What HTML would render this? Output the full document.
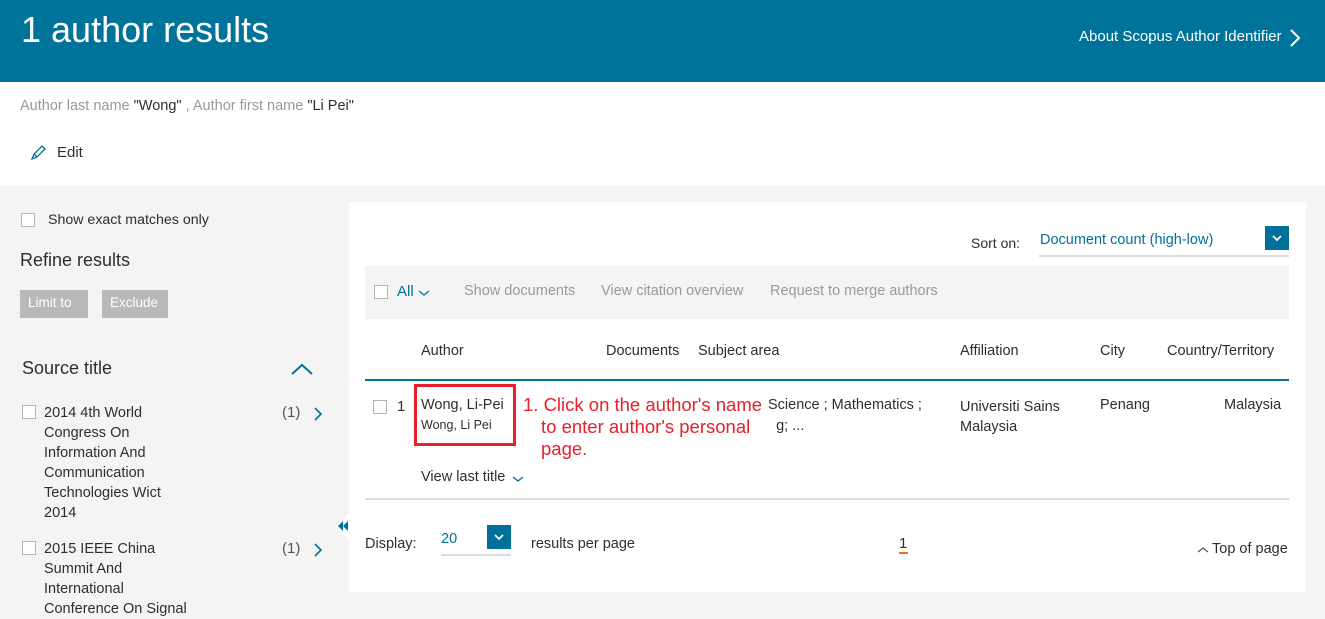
<!DOCTYPE html>
<html><head><meta charset="utf-8"><style>
*{margin:0;padding:0;box-sizing:border-box}
body{width:1325px;height:609px;overflow:hidden;background:#f4f4f4;font-family:"Liberation Sans",sans-serif;color:#2e2e2e;position:relative;font-size:14px}
.a{position:absolute;white-space:nowrap}
.cb{position:absolute;width:14px;height:14px;border:1.5px solid #b5b5b5;background:#fff}
.teal{color:#00719a}
.g{color:#9a9a9a}
</style></head><body>
<div class="a" style="left:0;top:0;width:1325px;height:82px;background:#00739a"></div>
<div class="a" style="left:21px;top:9px;font-size:36px;color:#fff">1 author results</div>
<div class="a" style="left:1079px;top:28px;font-size:15px;color:#fff">About Scopus Author Identifier</div>
<svg class="a" style="left:1288px;top:28px" width="14" height="20"><path d="M3 2l8 8-8 8" stroke="#fff" stroke-width="2" fill="none"/></svg>
<div class="a" style="left:0;top:82px;width:1325px;height:104px;background:#fff"></div>
<div class="a" style="left:20px;top:98px;font-size:14.5px" ><span class="g">Author last name </span>"Wong"<span class="g"> , Author first name </span>"Li Pei"</div>
<svg class="a" style="left:30px;top:145px" width="16" height="16"><path d="M2 14l2-5 8-8 3 3-8 8z M4 9l3 3" stroke="#00719a" stroke-width="1.3" fill="none"/></svg>
<div class="a" style="left:57px;top:144px;font-size:15px">Edit</div>

<div class="cb" style="left:21px;top:213px"></div>
<div class="a" style="left:48px;top:212px;font-size:14.2px">Show exact matches only</div>
<div class="a" style="left:20px;top:250px;font-size:18px">Refine results</div>
<div class="a" style="left:20px;top:290px;width:68px;height:28px;background:#b9b9b9;color:#fff;font-size:13.5px;padding:5px 0 0 8px">Limit to</div>
<div class="a" style="left:102px;top:290px;width:66px;height:28px;background:#b9b9b9;color:#fff;font-size:13.5px;padding:5px 0 0 8px">Exclude</div>
<div class="a" style="left:22px;top:358px;font-size:18px">Source title</div>
<svg class="a" style="left:290px;top:362px" width="24" height="14"><path d="M2 12l10-9 10 9" stroke="#00719a" stroke-width="2" fill="none"/></svg>
<div class="cb" style="left:22px;top:405px"></div>
<div class="a" style="left:44px;top:403px;font-size:14.5px;line-height:20px;white-space:normal;width:140px">2014 4th World Congress On Information And Communication Technologies Wict 2014</div>
<div class="a" style="left:282px;top:404px;font-size:15px;color:#555">(1)</div>
<svg class="a" style="left:313px;top:406px" width="10" height="16"><path d="M2 2l6 6-6 6" stroke="#00719a" stroke-width="1.6" fill="none"/></svg>
<div class="cb" style="left:22px;top:541px"></div>
<div class="a" style="left:44px;top:539px;font-size:14.5px;line-height:20px;white-space:normal;width:150px">2015 IEEE China Summit And International Conference On Signal</div>
<div class="a" style="left:282px;top:540px;font-size:15px;color:#555">(1)</div>
<svg class="a" style="left:313px;top:542px" width="10" height="16"><path d="M2 2l6 6-6 6" stroke="#00719a" stroke-width="1.6" fill="none"/></svg>

<div class="a" style="left:349px;top:202px;width:957px;height:390px;background:#fff"></div>
<svg class="a" style="left:334px;top:512px" width="16" height="30"><path d="M16 0L2 15l14 15z" fill="#fff"/><path d="M9 9l-5 5 5 5z M14 9l-5 5 5 5z" fill="#00719a"/></svg>
<div class="a" style="left:971px;top:235px;font-size:14px">Sort on:</div>
<div class="a teal" style="left:1040px;top:232px;font-size:14.5px">Document count (high-low)</div>
<div class="a" style="left:1039px;top:255px;width:250px;height:2px;background:#ddd"></div>
<div class="a" style="left:1265px;top:226px;width:24px;height:24px;background:#00719a"></div>
<svg class="a" style="left:1265px;top:226px" width="24" height="24"><path d="M8 10l4 4 4-4" stroke="#fff" stroke-width="1.8" fill="none"/></svg>
<div class="a" style="left:365px;top:266px;width:924px;height:53px;background:#f4f4f4"></div>
<div class="cb" style="left:374px;top:285px"></div>
<div class="a teal" style="left:397px;top:283px;font-size:15px">All</div>
<svg class="a" style="left:417px;top:288px" width="14" height="10"><path d="M2 3l5 4 5-4" stroke="#00719a" stroke-width="1.3" fill="none"/></svg>
<div class="a g" style="left:464px;top:283px;font-size:14.5px">Show documents</div>
<div class="a g" style="left:601px;top:283px;font-size:14.5px">View citation overview</div>
<div class="a g" style="left:770px;top:283px;font-size:14.5px">Request to merge authors</div>
<div class="a" style="left:421px;top:343px;font-size:14.5px">Author</div>
<div class="a" style="left:606px;top:343px;font-size:14.5px">Documents</div>
<div class="a" style="left:698px;top:343px;font-size:14.5px">Subject area</div>
<div class="a" style="left:960px;top:343px;font-size:14.5px">Affiliation</div>
<div class="a" style="left:1100px;top:343px;font-size:14.5px">City</div>
<div class="a" style="left:1167px;top:343px;font-size:14.5px">Country/Territory</div>
<div class="a" style="left:365px;top:379px;width:924px;height:2px;background:#00719a"></div>
<div class="cb" style="left:373px;top:400px"></div>
<div class="a" style="left:397px;top:398px;font-size:15px">1</div>
<div class="a" style="left:414px;top:384px;width:102px;height:62px;border:3px solid #e8202a"></div>
<div class="a" style="left:421px;top:397px;font-size:14.5px">Wong, Li-Pei</div>
<div class="a" style="left:421px;top:418px;font-size:12.5px">Wong, Li Pei</div>
<div class="a" style="left:768px;top:397px;font-size:14.5px">Science ; Mathematics ;</div>
<div class="a" style="left:768px;top:418px;font-size:14.5px">ng; ...</div>
<div class="a" style="left:523px;top:394px;font-size:18.5px;color:#e8202a;line-height:22px;background:#fff;padding-right:4px">1. Click on the author's name</div>
<div class="a" style="left:541px;top:416px;font-size:18.5px;color:#e8202a;line-height:22px;white-space:normal;width:235px;background:#fff">to enter author's personal page.</div>
<div class="a" style="left:960px;top:397px;font-size:14.5px;line-height:20px">Universiti Sains<br>Malaysia</div>
<div class="a" style="left:1100px;top:397px;font-size:14.5px">Penang</div>
<div class="a" style="left:1224px;top:397px;font-size:14.5px">Malaysia</div>
<div class="a" style="left:421px;top:469px;font-size:14.5px">View last title</div>
<svg class="a" style="left:511px;top:474px" width="14" height="10"><path d="M2 3l5 4 5-4" stroke="#00719a" stroke-width="1.3" fill="none"/></svg>
<div class="a" style="left:365px;top:498px;width:924px;height:2px;background:#ddd"></div>
<div class="a" style="left:365px;top:536px;font-size:14.5px">Display:</div>
<div class="a teal" style="left:441px;top:531px;font-size:14.5px">20</div>
<div class="a" style="left:441px;top:554px;width:70px;height:2px;background:#ddd"></div>
<div class="a" style="left:487px;top:525px;width:24px;height:24px;background:#00719a"></div>
<svg class="a" style="left:487px;top:525px" width="24" height="24"><path d="M8 10l4 4 4-4" stroke="#fff" stroke-width="1.8" fill="none"/></svg>
<div class="a" style="left:531px;top:536px;font-size:14.5px">results per page</div>
<div class="a" style="left:899px;top:535px;font-size:15px">1</div>
<div class="a" style="left:899px;top:552px;width:9px;height:2px;background:#e9711c"></div>
<svg class="a" style="left:1196px;top:545px" width="14" height="10"><path d="M2 7l5-4 5 4" stroke="#555" stroke-width="1.2" fill="none"/></svg>
<div class="a" style="left:1212px;top:541px;font-size:14.5px">Top of page</div>
</body></html>
